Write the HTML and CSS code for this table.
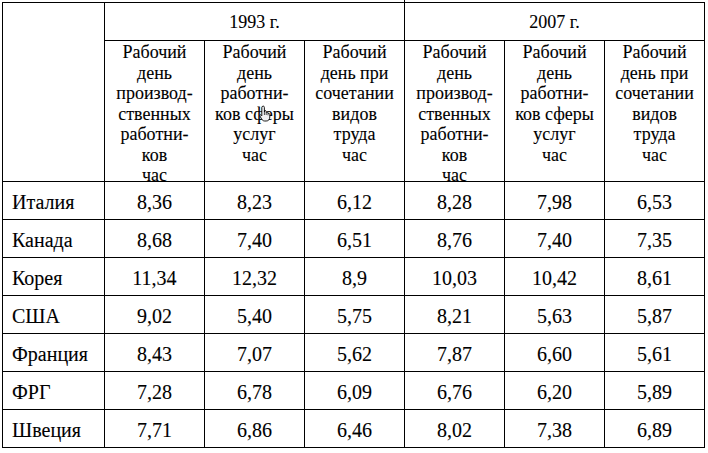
FILE: index.html
```html
<!DOCTYPE html>
<html lang="ru">
<head>
<meta charset="utf-8">
<link rel="stylesheet" href="styles.css">
</head>
<body>
<div class="wrap">
<table class="tbl">
  <colgroup>
    <col class="c0"><col class="c"><col class="c"><col class="c"><col class="c"><col class="c"><col class="c">
  </colgroup>
  <tr class="h1">
    <td rowspan="2"></td>
    <td colspan="3" class="year">1993 г.</td>
    <td colspan="3" class="year">2007 г.</td>
  </tr>
  <tr class="h2">
    <td><div class="hd">Рабочий<br>день<br>производ-<br>ственных<br>работни-<br>ков<br>час</div></td>
    <td><div class="hd">Рабочий<br>день<br>работни-<br>ков сферы<br>услуг<br>час</div></td>
    <td><div class="hd">Рабочий<br>день при<br>сочетании<br>видов<br>труда<br>час</div></td>
    <td><div class="hd">Рабочий<br>день<br>производ-<br>ственных<br>работни-<br>ков<br>час</div></td>
    <td><div class="hd">Рабочий<br>день<br>работни-<br>ков сферы<br>услуг<br>час</div></td>
    <td><div class="hd">Рабочий<br>день при<br>сочетании<br>видов<br>труда<br>час</div></td>
  </tr>
  <tr class="row"><td class="name">Италия</td><td>8,36</td><td>8,23</td><td>6,12</td><td>8,28</td><td>7,98</td><td>6,53</td></tr>
  <tr class="row"><td class="name">Канада</td><td>8,68</td><td>7,40</td><td>6,51</td><td>8,76</td><td>7,40</td><td>7,35</td></tr>
  <tr class="row"><td class="name">Корея</td><td>11,34</td><td>12,32</td><td>8,9</td><td>10,03</td><td>10,42</td><td>8,61</td></tr>
  <tr class="row"><td class="name">США</td><td>9,02</td><td>5,40</td><td>5,75</td><td>8,21</td><td>5,63</td><td>5,87</td></tr>
  <tr class="row"><td class="name">Франция</td><td>8,43</td><td>7,07</td><td>5,62</td><td>7,87</td><td>6,60</td><td>5,61</td></tr>
  <tr class="row"><td class="name">ФРГ</td><td>7,28</td><td>6,78</td><td>6,09</td><td>6,76</td><td>6,20</td><td>5,89</td></tr>
  <tr class="row"><td class="name">Швеция</td><td>7,71</td><td>6,86</td><td>6,46</td><td>8,02</td><td>7,38</td><td>6,89</td></tr>
</table>
<span class="tick"></span>
<svg class="cursor" width="13" height="17" viewBox="0 0 13 17">
  <path d="M4 1.2 C4.9 1 5.4 1.6 5.4 2.4 L5.4 7 L5.6 5.6 C6.5 5.3 7.2 5.7 7.2 6.6 L7.3 7.3 C8.1 6.8 8.9 7.2 9 8 L9.1 8.5 C9.9 8.1 10.8 8.6 10.8 9.5 L10.8 12 C10.8 14.5 9.4 16 7.2 16 L5.6 16 C4.2 16 3.4 15.2 2.6 14 L0.9 11 C0.5 10.2 1.3 9.4 2.1 9.9 L2.8 10.8 L2.8 2.4 C2.8 1.7 3.3 1.2 4 1.2 Z" fill="#f2f2f2" stroke="#000" stroke-width="0.9"/>
  <path d="M5.4 7 L5.4 10 M7.2 7 L7.2 10 M9 8.3 L9 10.3" fill="none" stroke="#000" stroke-width="0.7"/>
</svg>
</div>
</body>
</html>
```

FILE: styles.css
```css
html, body {
  margin: 0;
  padding: 0;
  background: #fff;
}
.wrap {
  position: relative;
  padding: 2px 0 0 2px;
}
.tbl {
  border-collapse: collapse;
  table-layout: fixed;
  width: 703px;
  font-family: "Liberation Serif", "Times New Roman", serif;
  color: #000;
  -webkit-text-stroke: 0.1px #000;
}
.c0 { width: 102px; }
.c { width: 100px; }
.tbl td {
  border: 1px solid #000;
  padding: 0;
  text-align: center;
  vertical-align: top;
}
.h1 { height: 38px; }
.tbl td.year {
  font-size: 18px;
  line-height: 20.5px;
  padding-top: 9px;
}
.h2 { height: 141px; }
.hd {
  height: 139px;
  padding-top: 1px;
  font-size: 18px;
  line-height: 20.5px;
}
.row { height: 38px; }
.tbl .row td {
  font-size: 20px;
  line-height: 22px;
  padding-top: 9px;
}
.tbl td.name {
  text-align: left;
  padding-left: 9px;
}
.tick {
  position: absolute;
  left: 404px;
  top: 0;
  width: 1px;
  height: 3px;
  background: #000;
}
.cursor {
  position: absolute;
  left: 259px;
  top: 105px;
}
```
